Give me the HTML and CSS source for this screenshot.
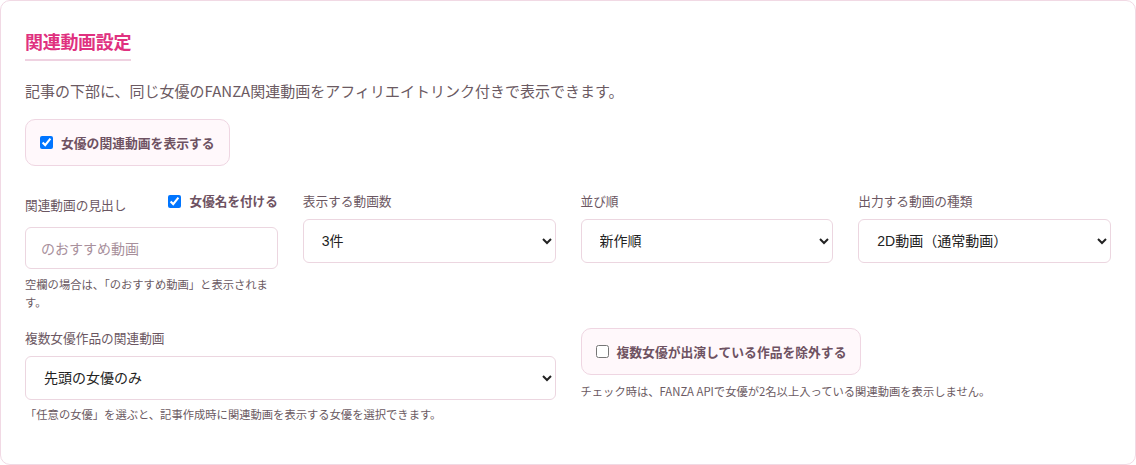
FILE: index.html
```html
<!DOCTYPE html>
<html lang="ja">
<head>
<meta charset="utf-8">
<title>関連動画設定</title>
<link rel="stylesheet" href="styles.css">
</head>
<body>
<section class="card">
  <h2 class="card-title">関連動画設定</h2>
  <p class="desc">記事の下部に、同じ女優のFANZA関連動画をアフィリエイトリンク付きで表示できます。</p>
  <label class="check-box">
    <input type="checkbox" checked>
    <span>女優の関連動画を表示する</span>
  </label>

  <div class="grid">
    <div class="field">
      <div class="field-head">
        <span class="label">関連動画の見出し</span>
        <label class="inline-check">
          <input type="checkbox" checked>
          <span>女優名を付ける</span>
        </label>
      </div>
      <input class="text-input" type="text" placeholder="のおすすめ動画">
      <p class="help">空欄の場合は、「のおすすめ動画」と表示されます。</p>
    </div>
    <div class="field">
      <div class="label label-row">表示する動画数</div>
      <select class="select"><option>3件</option></select>
    </div>
    <div class="field">
      <div class="label label-row">並び順</div>
      <select class="select"><option>新作順</option></select>
    </div>
    <div class="field">
      <div class="label label-row">出力する動画の種類</div>
      <select class="select"><option>2D動画（通常動画）</option></select>
    </div>

    <div class="field span-2">
      <div class="label label-row">複数女優作品の関連動画</div>
      <select class="select"><option>先頭の女優のみ</option></select>
      <p class="help help-one">「任意の女優」を選ぶと、記事作成時に関連動画を表示する女優を選択できます。</p>
    </div>
    <div class="field span-2">
      <div>
        <label class="check-box check-box-row2">
          <input type="checkbox">
          <span>複数女優が出演している作品を除外する</span>
        </label>
      </div>
      <p class="help help-one help-check">チェック時は、FANZA APIで女優が2名以上入っている関連動画を表示しません。</p>
    </div>
  </div>
</section>
</body>
</html>
```

FILE: styles.css
```css
* { box-sizing: border-box; }

html, body {
  margin: 0;
  padding: 0;
  background: #ffffff;
}

body {
  font-family: "Noto Sans CJK JP", "Noto Sans", sans-serif;
  color: #6b5a62;
}

.card {
  width: 1136px;
  height: 465px;
  border: 1px solid #f1d9e4;
  border-radius: 10px;
  padding: 27px 24px 0 24px;
  background: #ffffff;
}

.card-title {
  display: inline-block;
  margin: 0;
  font-size: 18px;
  line-height: 27px;
  font-weight: 700;
  color: #e0317f;
  padding-bottom: 4px;
  border-bottom: 2px solid #efd2e1;
  letter-spacing: -0.3px;
}

.desc {
  margin: 18px 0 0 0;
  font-size: 15px;
  line-height: 23px;
  color: #6b5a62;
}

.check-box {
  display: inline-flex;
  align-items: center;
  gap: 8px;
  margin-top: 17px;
  height: 47px;
  padding: 0 14px;
  border: 1px solid #efd6e2;
  border-radius: 10px;
  background: #fff8fb;
  font-size: 12.8px;
  font-weight: 700;
  color: #6e5262;
  cursor: pointer;
}

.check-box input,
.inline-check input {
  margin: 0;
  width: 13px;
  height: 13px;
}

.grid {
  display: grid;
  grid-template-columns: repeat(4, 1fr);
  column-gap: 25px;
  row-gap: 17px;
  margin-top: 25px;
}

.span-2 { grid-column: span 2; }

.field { display: flex; flex-direction: column; }

.field-head {
  display: flex;
  justify-content: space-between;
  align-items: flex-start;
  height: 28px;
  margin-bottom: 8px;
}

.field-head .label {
  align-self: center;
  line-height: 20px;
}

.label {
  font-size: 12.7px;
  line-height: 20px;
  color: #6b5762;
}

.label-row { margin-bottom: 8px; }

.inline-check {
  display: inline-flex;
  align-items: center;
  gap: 9px;
  font-size: 12.6px;
  line-height: 20px;
  font-weight: 700;
  color: #6e5262;
}

.text-input {
  width: 100%;
  height: 42px;
  border: 1px solid #ecd6e0;
  border-radius: 6px;
  padding: 0 15px;
  font-family: inherit;
  font-size: 14px;
  color: #2b2226;
  background: #fff;
  outline: none;
}

.text-input::placeholder { color: #a8909c; }

.select {
  width: 100%;
  height: 44px;
  border: 1px solid #ecd6e0;
  border-radius: 6px;
  padding: 0 6px 0 14px;
  font-family: "Liberation Sans", "Noto Sans CJK JP", sans-serif;
  font-size: 14px;
  color: #222;
  background: #fff;
}

.help {
  margin: 6px 0 0 0;
  font-size: 11.3px;
  line-height: 18px;
  color: #6b5a62;
}

.help-one { margin-top: 5px; }

.check-box-row2 {
  margin-top: 0;
  padding: 0 14px;
}

.help-check { margin-top: 7px; }
```
